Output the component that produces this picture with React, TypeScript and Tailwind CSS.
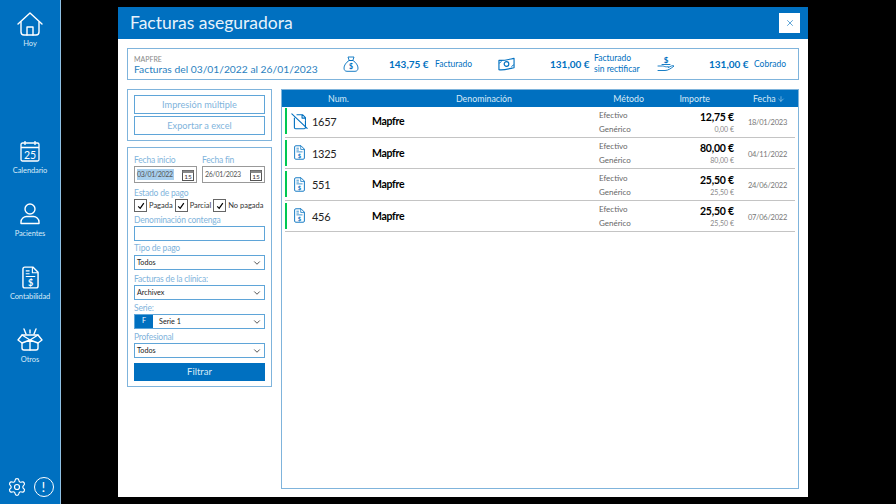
import { ChevronDown, X, ArrowDown, Settings } from "lucide-react";

const blue = "bg-[#0070c0]";

function HomeIcon() {
  return (
    <svg viewBox="0 0 26 24" className="w-[26px] h-[24px]" fill="none" stroke="white" strokeWidth="1.4" strokeLinejoin="round" strokeLinecap="round">
      <path d="M1 12 13 1l12 11" />
      <path d="M4 10v10a3 3 0 0 0 3 3h12a3 3 0 0 0 3-3V10" />
      <path d="M10 23v-8h6v8" />
    </svg>
  );
}

function CalendarIcon() {
  return (
    <svg viewBox="0 0 20 22" className="w-[20px] h-[22px]" fill="none" stroke="white" strokeWidth="1.3">
      <rect x="1" y="3" width="18" height="18" rx="1.5" />
      <path d="M1 7.5h18M5 1v4M15 1v4" />
      <text x="10" y="18.5" textAnchor="middle" fontSize="10.5" fill="white" stroke="none" fontFamily="Lato, sans-serif">25</text>
    </svg>
  );
}

function PatientIcon() {
  return (
    <svg viewBox="0 0 20 22" className="w-[20px] h-[22px]" fill="none" stroke="white" strokeWidth="1.4">
      <circle cx="10" cy="6" r="5" />
      <path d="M1 20.5v-1.5c0-3.5 3-5.5 5.5-5.5h7c2.500 0 5.500 2 5.500 5.500v1.500z" strokeLinejoin="round" />
    </svg>
  );
}

function InvoiceIcon({ className, stroke = "white" }: { className: string; stroke?: string }) {
  return (
    <svg viewBox="0 0 18 24" className={className} fill="none" stroke={stroke} strokeWidth="1.5" strokeLinejoin="round">
      <path d="M3 1h8.500L17 6.500V21a2 2 0 0 1-2 2H3a2 2 0 0 1-2-2V3a2 2 0 0 1 2-2z" />
      <path d="M11 1v6h6M4 5h4M4 8h4M4 11h10" strokeWidth="1.2" />
      <text x="9" y="20.500" textAnchor="middle" fontSize="9.500" fontWeight="700" fill={stroke} stroke="none" fontFamily="Lato, sans-serif">$</text>
    </svg>
  );
}

function VoidInvoiceIcon() {
  return (
    <svg viewBox="0 0 20 20" className="w-[17px] h-[17px]" fill="none" stroke="#0070c0" strokeWidth="1.300" strokeLinejoin="round" strokeLinecap="round">
      <path d="M4 6v11a1.500 1.500 0 0 0 1.500 1.500h10a1.500 1.500 0 0 0 1.500-1.500V9" />
      <path d="M7 2h6.500L17 5.500V8M13 2v4h4" />
      <path d="M1 1l18 17" />
    </svg>
  );
}

function BoxIcon() {
  return (
    <svg viewBox="0 0 26 24" className="w-[26px] h-[24px]" fill="none" stroke="white" strokeWidth="1.4" strokeLinejoin="round" strokeLinecap="round">
      <path d="M9 6 7 1M17 6l2-5M13 5V2" />
      <path d="M5 7h16l4 5-4 3v5a2 2 0 0 1-2 2H7a2 2 0 0 1-2-2v-5l-4-3z" />
      <path d="M5 7l8 5 8-5M5 15l8-3 8 3M13 12v10" />
    </svg>
  );
}

function MoneyBagIcon() {
  return (
    <svg viewBox="0 0 16 16" className="w-[16px] h-[16px]" fill="none" stroke="#0070c0" strokeWidth="0.9" strokeLinejoin="round">
      <path d="M5 1h6L9.800 4.500H6.200z" />
      <path d="M6 4.500h4c3 2 5 5 5 7.500 0 2-1 3.300-3 3.300H4c-2 0-3-1.300-3-3.300 0-2.500 2-5.500 5-7.500z" />
      <text x="8" y="12.500" textAnchor="middle" fontSize="7" fontWeight="700" fill="#0070c0" stroke="none" fontFamily="Lato, sans-serif">$</text>
    </svg>
  );
}

function BillsIcon() {
  return (
    <svg viewBox="0 0 18 14" className="w-[17px] h-[14px]" fill="none" stroke="#0070c0" strokeWidth="1.200" strokeLinejoin="round">
      <path d="M1 3c4 1 11-1 16-2v10c-5 1-12 3-16 2z" />
      <circle cx="9" cy="7" r="2.500" />
      <path d="M1 6c1.500 0 2.500-1 2.500-2.500M17 8c-1.500 0-2.500 1-2.500 2.500" strokeWidth="0.9" />
    </svg>
  );
}

function HandCoinIcon() {
  return (
    <svg viewBox="0 0 18 16" className="w-[18px] h-[16px]" fill="none" stroke="#0070c0" strokeWidth="0.9" strokeLinecap="round" strokeLinejoin="round">
      <text x="9" y="7" textAnchor="middle" fontSize="8" fontWeight="700" fill="#0070c0" stroke="none" fontFamily="Lato, sans-serif">$</text>
      <path d="M1 10h4.500c1.500 0 2 .8 4 .8h2M1 14.500h7c3 0 6-2 9-4.500-1.500-.8-3 0-5.500 1.500" />
      <path d="M5 8.500h8" />
    </svg>
  );
}

function DatePickerIcon() {
  return (
    <svg viewBox="0 0 12 12" className="w-[12px] h-[12px] shrink-0" fill="none" stroke="#555" strokeWidth="1">
      <rect x="0.500" y="1.500" width="11" height="10" fill="white" />
      <rect x="0.500" y="1.500" width="11" height="2.500" fill="#888" stroke="none" />
      <text x="6" y="10.300" textAnchor="middle" fontSize="6.500" fill="#333" stroke="none" fontFamily="Lato, sans-serif">15</text>
    </svg>
  );
}

function NavItem({ icon, label, className }: { icon: React.ReactNode; label: string; className: string }) {
  return (
    <div className={`flex flex-col items-center ${className}`}>
      <div className="h-[24px] flex items-center">{icon}</div>
      <span className="text-[7.500px] tracking-[-0.1px] leading-[11px] mt-[2px] text-[#d8eaf7]">{label}</span>
    </div>
  );
}

function Check({ label }: { label: string }) {
  return (
    <div className="flex items-center gap-[2px]">
      <div className="w-[13px] h-[13px] border border-[#666] flex items-center justify-center">
        <svg viewBox="0 0 10 10" className="w-[8px] h-[8px]" fill="none" stroke="black" strokeWidth="1.500">
          <path d="M1.500 5.500 4 8l4.500-6.500" />
        </svg>
      </div>
      <span className="text-[7.500px] text-[#333] leading-none">{label}</span>
    </div>
  );
}

function Label({ children }: { children: string }) {
  return <div className="text-[8.500px] tracking-[-0.2px] pt-[1px] leading-[12px] text-[#7fb4dc]">{children}</div>;
}

function SelectBox({ value }: { value: string }) {
  return (
    <div className="h-[15px] border border-[#5fa5d8] flex items-center justify-between pl-[2px] pr-[2px] text-[7.200px] text-[#222]">
      <span className="pt-[1px]">{value}</span>
      <ChevronDown size={10} strokeWidth={2} color="#333" />
    </div>
  );
}

const rows = [
  { num: "1657", total: "12,75 €", paid: "0,00 €", date: "18/01/2023", voided: true },
  { num: "1325", total: "80,00 €", paid: "80,00 €", date: "04/11/2022", voided: false },
  { num: "551", total: "25,50 €", paid: "25,50 €", date: "24/06/2022", voided: false },
  { num: "456", total: "25,50 €", paid: "25,50 €", date: "07/06/2022", voided: false },
];

export default function App() {
  return (
    <div className="w-[896px] h-[504px] bg-black flex overflow-hidden font-['Lato',sans-serif]">
      {/* sidebar */}
      <aside className={`w-[61px] h-full ${blue} border-r border-[#8fc0e4] flex flex-col items-center`}>
        <NavItem className="mt-[12px]" icon={<HomeIcon />} label="Hoy" />
        <NavItem className="mt-[90px]" icon={<CalendarIcon />} label="Calendario" />
        <NavItem className="mt-[26px]" icon={<PatientIcon />} label="Pacientes" />
        <NavItem className="mt-[26px]" icon={<InvoiceIcon className="w-[17px] h-[23px]" />} label="Contabilidad" />
        <NavItem className="mt-[26px]" icon={<BoxIcon />} label="Otros" />
        <div className="mt-auto mb-[7px] flex items-center gap-[7px]">
          <Settings size={20} strokeWidth={1.4} color="white" />
          <div className="w-[20px] h-[20px] rounded-full border-[1.5px] border-white text-white text-[14px] leading-none flex items-center justify-center">!</div>
        </div>
      </aside>

      {/* modal */}
      <main className="ml-[57px] mt-[7px] w-[690px] h-[490px] bg-white flex flex-col">
        <header className={`h-[32px] ${blue} flex items-center justify-between pl-[12px] pr-[8px] shrink-0`}>
          <h1 className="text-[17.500px] text-[#e6f2fb]">Facturas aseguradora</h1>
          <div className="w-[21px] h-[20px] bg-white flex items-center justify-center">
            <X size={10} strokeWidth={1.5} color="#0070c0" />
          </div>
        </header>

        <div className="flex flex-col gap-[9px] pt-[9px] px-[9px] flex-1 pb-[8px]">
          {/* summary */}
          <section className="h-[32px] border border-[#7fb4dc] flex items-center pl-[6px] shrink-0 whitespace-nowrap">
            <div className="w-[209px] pt-[2px]">
              <div className="text-[7px] leading-[8px] text-[#888]">MAPFRE</div>
              <div className="text-[10.300px] leading-[12px] text-[#2a7fc0]">Facturas del 03/01/2022 al 26/01/2023</div>
            </div>
            <div className="w-[46px]"><MoneyBagIcon /></div>
            <span className="w-[46px] text-[10px] font-bold text-[#0070c0]">143,75 €</span>
            <span className="w-[63px] text-[8.500px] text-[#0070c0]">Facturado</span>
            <div className="w-[52px]"><BillsIcon /></div>
            <span className="w-[44px] text-[10px] font-bold text-[#0070c0]">131,00 €</span>
            <span className="w-[63px] text-[8.500px] leading-[11px] text-[#0070c0]">Facturado<br />sin rectificar</span>
            <div className="w-[52px]"><HandCoinIcon /></div>
            <span className="w-[45px] text-[10px] font-bold text-[#0070c0]">131,00 €</span>
            <span className="text-[8.500px] text-[#0070c0]">Cobrado</span>
          </section>

          <div className="flex gap-[9px] flex-1 min-h-0">
            {/* left column */}
            <div className="w-[145px] shrink-0 flex flex-col gap-[6px]">
              <div className="h-[52px] border border-[#7fb4dc] px-[6px] pt-[5px] flex flex-col gap-[2px]">
                <div className="h-[19px] border border-[#5fa5d8] text-[9.200px] text-[#7fb4dc] flex items-center justify-center">Impresión múltiple</div>
                <div className="h-[19px] border border-[#5fa5d8] text-[9.200px] text-[#7fb4dc] flex items-center justify-center">Exportar a excel</div>
              </div>

              <div className="h-[240px] border border-[#7fb4dc] px-[6px] pt-[5px] flex flex-col">
                <div className="flex gap-[5px]">
                  <div className="w-[63px]">
                    <Label>Fecha inicio</Label>
                    <div className="h-[17px] border border-[#999] flex items-center justify-between px-[2px]">
                      <span className="bg-[#a9d0ee] text-[7px] tracking-[-0.3px] text-[#555] leading-[11px] pr-[1px]">03/01/2022</span>
                      <DatePickerIcon />
                    </div>
                  </div>
                  <div className="w-[63px]">
                    <Label>Fecha fin</Label>
                    <div className="h-[17px] border border-[#999] flex items-center justify-between px-[2px]">
                      <span className="text-[7px] tracking-[-0.3px] text-[#555] leading-[11px]">26/01/2023</span>
                      <DatePickerIcon />
                    </div>
                  </div>
                </div>
                <div className="mt-[3px]"><Label>Estado de pago</Label></div>
                <div className="flex gap-[2px] items-center whitespace-nowrap">
                  <Check label="Pagada" />
                  <Check label="Parcial" />
                  <Check label="No pagada" />
                </div>
                <div className="mt-[1px]"><Label>Denominación contenga</Label></div>
                <div className="h-[15px] border border-[#5fa5d8]" />
                <div><Label>Tipo de pago</Label></div>
                <div className="mt-[1px]"><SelectBox value="Todos" /></div>
                <div className="mt-[2px]"><Label>Facturas de la clínica:</Label></div>
                <SelectBox value="Archivex" />
                <div className="mt-[1px]"><Label>Serie:</Label></div>
                <div className="h-[15px] border border-[#5fa5d8] flex items-center text-[7.200px] text-[#222] pr-[2px]">
                  <div className={`w-[18px] h-full ${blue} text-white flex items-center justify-center`}>F</div>
                  <span className="ml-[6px] pt-[1px] flex-1">Serie 1</span>
                  <ChevronDown size={10} strokeWidth={2} color="#333" />
                </div>
                <div className="mt-[1px]"><Label>Profesional</Label></div>
                <SelectBox value="Todos" />
                <div className={`mt-[5px] h-[18px] ${blue} text-[#d8eaf7] text-[9.500px] flex items-center justify-center`}>Filtrar</div>
              </div>
            </div>

            {/* table */}
            <section className="flex-1 border border-[#7fb4dc] flex flex-col">
              <div className={`h-[17px] ${blue} flex items-center text-[8.800px] text-[#d8eaf7] shrink-0`}>
                <span className="w-[113px] text-center">Num.</span>
                <span className="w-[178px] text-center">Denominación</span>
                <span className="w-[71px] text-right">Método</span>
                <span className="w-[66px] text-right">Importe</span>
                <span className="pl-[43px] flex items-center gap-[1px]">
                  Fecha <ArrowDown size={8} strokeWidth={1.5} />
                </span>
              </div>
              <ul className="px-[3px] -mt-[1px]">
                {rows.map((row) => (
                  <li key={row.num} className="h-[31.500px] border-b border-[#c4c4c4] flex items-center">
                    <div className="w-[2px] h-[26px] bg-[#00c853] shrink-0" />
                    <div className="w-[20px] ml-[2px] shrink-0 flex justify-center">
                      {row.voided ? <VoidInvoiceIcon /> : <InvoiceIcon className="w-[11px] h-[15px]" stroke="#0070c0" />}
                    </div>
                    <span className="w-[60px] ml-[3px] pt-[2px] text-[11px] tracking-[-0.3px] text-[#222]">{row.num}</span>
                    <span className="w-[227px] pt-[2px] text-[10.500px] tracking-[-0.3px] font-bold text-black">Mapfre</span>
                    <div className="w-[60px] pt-[1px] text-[8px] leading-[14px] text-[#666]">
                      <div>Efectivo</div>
                      <div>Genérico</div>
                    </div>
                    <div className="w-[75px] pt-[2px] text-right">
                      <div className="text-[10.500px] tracking-[-0.2px] leading-[13px] font-bold text-black">{row.total}</div>
                      <div className="text-[7px] leading-[10px] text-[#888]">{row.paid}</div>
                    </div>
                    <span className="flex-1 pt-[3px] text-right text-[7.500px] tracking-[-0.25px] text-[#777] pr-[8px]">{row.date}</span>
                  </li>
                ))}
              </ul>
            </section>
          </div>
        </div>
      </main>
    </div>
  );
}
